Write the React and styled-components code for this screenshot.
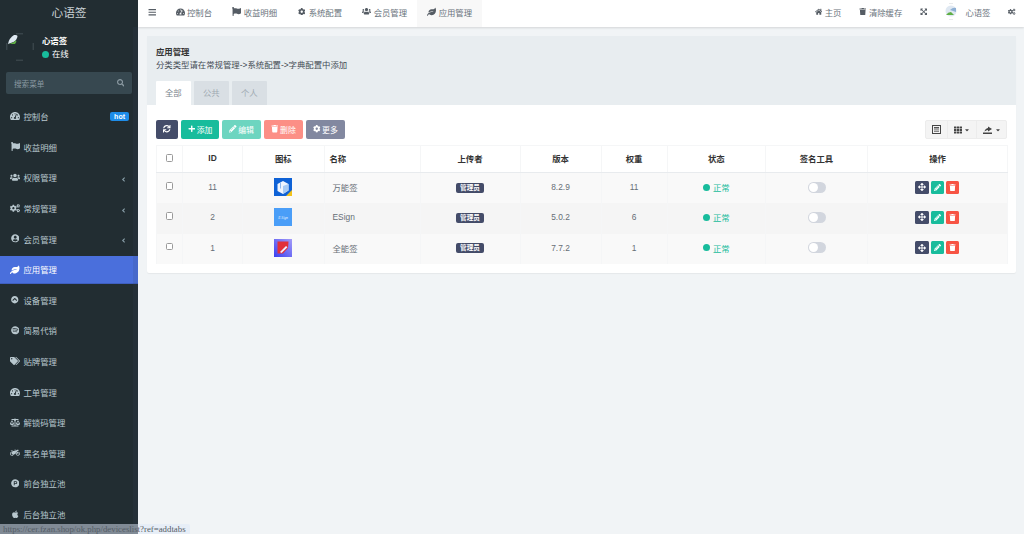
import React from 'react';
import styled, { createGlobalStyle } from 'styled-components';
import {
  FaTachometerAlt, FaFlag, FaUsers, FaCogs, FaUserCircle, FaLeaf, FaChevronCircleUp, FaSpotify, FaTags,
  FaBalanceScale, FaMotorcycle, FaProductHunt, FaApple, FaSearch, FaSync, FaPlus, FaPencilAlt,
  FaTrash, FaCog, FaHome, FaExpandArrowsAlt, FaArrowsAlt, FaTh, FaAngleLeft, FaBars, FaCaretDown,
} from 'react-icons/fa';

const Global = createGlobalStyle`
  html, body { margin: 0; padding: 0; height: 100%; overflow: hidden; background: #f1f4f6; }
  #root { height: 100%; }
  * { box-sizing: border-box; }
  body { font-family: "Liberation Sans", "Noto Sans CJK SC", sans-serif; font-size: 8.4px; color: #444c54; }
`;

const Shell = styled.div`position: relative; display: flex; width: 1024px; height: 534px; overflow: hidden;`;
const Sidebar = styled.aside`position: relative; width: 138px; flex: none; background: #222d32; display: flex; flex-direction: column; overflow: hidden;`;
const SideStrip = styled.div`position: absolute; top: 27px; right: 0; bottom: 0; width: 5px; background: rgba(60, 70, 100, .14);`;
const Logo = styled.div`height: 27px; flex: none; display: flex; align-items: center; justify-content: center; color: #c8d0d4; font-size: 11.7px; padding-bottom: 5px;`;
const UserPanel = styled.div`height: 43px; flex: none; display: flex; padding: 6px 0 0 6px; gap: 8px;`;
const AvatarWrap = styled.div`width: 28px; height: 28px; flex: none;`;
const UserMeta = styled.div`display: flex; flex-direction: column; gap: 3.6px; padding-top: 2.7px; color: #fff; font-size: 8.4px; font-weight: 700; line-height: 10px;`;
const Online = styled.div`display: flex; align-items: center; gap: 3px; font-weight: 400;`;
const Dot = styled.span`width: 7px; height: 7px; border-radius: 50%; background: #18bc9c; display: inline-block; flex: none;`;
const SearchBox = styled.div`margin: 2px 6px 0; height: 22px; flex: none; border-radius: 2px; background: #374850; color: #8a99a1; display: flex; align-items: center; justify-content: space-between; padding: 0 8px; font-size: 7.6px;`;
const Menu = styled.nav`margin-top: 9px; display: flex; flex-direction: column; gap: 3px;`;
const MenuItem = styled.div`
  height: 27.6px; flex: none; display: flex; align-items: center; padding: 0 9px 1px 10px;
  background: ${p => (p.$active ? '#4a6fdc' : 'transparent')};
  box-shadow: ${p => (p.$active ? 'inset 0 -1px 0 #3f5fc0' : 'none')};
  color: ${p => (p.$active ? '#fff' : '#b8c7ce')};
  font-size: 8.4px;
`;
const MenuIcon = styled.span`width: 10px; display: inline-flex; justify-content: center; flex: none;`;
const MenuLabel = styled.span`flex: 1; margin-left: 3.5px;`;
const Hot = styled.span`background: #1e8ce8; color: #fff; font-size: 7px; font-weight: 700; padding: 1px 4px; border-radius: 2px; line-height: 7px;`;
const Arrow = styled.span`display: inline-flex; font-size: 7px; color: #8aa0aa; margin-right: 2px; padding-top: 4px;`;

const Main = styled.div`flex: 1; min-width: 0; display: flex; flex-direction: column;`;
const Topbar = styled.header`height: 27px; flex: none; background: #fff; box-shadow: 0 1px 2px rgba(0,0,0,.12); display: flex; align-items: stretch; justify-content: space-between; color: #6a737c;`;
const TopLeft = styled.div`display: flex; align-items: stretch;`;
const TopRight = styled.div`display: flex; align-items: center; gap: 17.5px; padding-right: 8.5px;`;
const Burger = styled.span`width: 27.5px; display: flex; align-items: center; justify-content: center; font-size: 8.5px; padding-bottom: 3px; color: #555c64;`;
const NavTab = styled.div`display: flex; align-items: center; gap: 2.5px; padding: 0 10px 4px; font-size: 8.4px; background: ${p => (p.$active ? '#f8f8f8' : 'transparent')};`;
const NavIcon = styled.span`width: 9px; display: inline-flex; justify-content: center; color: #555c64; flex: none;`;
const TopLink = styled.span`display: inline-flex; align-items: center; gap: 2.5px; padding-bottom: 4px; svg { font-size: 7.5px; color: #555c64; }`;
const TopUser = styled.span`display: inline-flex; align-items: center; gap: 8.5px; padding-bottom: 4px;`;

const Content = styled.main`flex: 1; padding: 9px 8px 0 9px; min-height: 0;`;
const Panel = styled.section`background: #fff; border-radius: 2px; box-shadow: 0 1px 1px rgba(0,0,0,.05); height: 237px;`;
const PanelHead = styled.div`height: 69px; background: #e8edf0; padding: 11px 9px 0; display: flex; flex-direction: column;`;
const PanelTitle = styled.div`font-weight: 700; line-height: 11px; color: #333;`;
const PanelNote = styled.div`line-height: 13px; margin-top: 1px; color: #444c54;`;
const Tabs = styled.div`display: flex; gap: 3.5px; margin-top: 9px;`;
const Tab = styled.div`width: 34.5px; height: 24px; padding-bottom: 2px; display: flex; align-items: center; justify-content: center; border-radius: 1px 1px 0 0; color: ${p => (p.$active ? '#7b858d' : '#a0aab2')}; background: ${p => (p.$active ? '#fff' : '#d9dfe4')};`;
const PanelBody = styled.div`padding: 15px 9px 0;`;
const Toolbar = styled.div`display: flex; justify-content: space-between; align-items: flex-start; height: 25px;`;
const Actions = styled.div`display: flex; gap: 2.8px;`;
const Btn = styled.span`
  height: 19px; width: ${p => p.$w}px; border-radius: 2px; display: inline-flex; align-items: center; justify-content: center; gap: 1.5px; padding-bottom: 1px;
  color: #fff; background: ${p => p.$bg}; font-size: 7.9px; svg { font-size: 7.5px; }
`;
const Group = styled.div`display: flex; height: 19px; background: #f4f4f4; border: 1px solid #ececec; border-radius: 2px; color: #444;`;
const GroupBtn = styled.span`width: ${p => p.$w}px; display: inline-flex; align-items: center; justify-content: center; gap: 2px; border-right: ${p => (p.$last ? 'none' : '1px solid #ececec')}; svg { font-size: 8px; }`;

const Table = styled.table`width: 851px; table-layout: fixed; border-collapse: collapse; color: #666e76;`;
const Th = styled.th`height: 27px; padding: 0 ${p => (p.$left ? '5px' : '0')} 2px; font-weight: 700; font-size: 8.4px; color: #333; text-align: ${p => (p.$left ? 'left' : 'center')}; border: 1px solid #f5f6f7; border-bottom: 1px solid #e8ebee;`;
const Tr = styled.tr`background: ${p => (p.$alt ? '#f5f5f5' : '#f9f9f9')};`;
const Td = styled.td`height: 30.5px; padding: 0 ${p => (p.$left ? '8px' : '0')} 2px; text-align: ${p => (p.$left ? 'left' : 'center')}; border-left: 1px solid #f5f6f7; border-right: 1px solid #f5f6f7;`;
const Check = styled.span`display: inline-block; width: 7.5px; height: 7.5px; border: 1px solid #9a9a9a; border-radius: 1.5px; background: #fff; vertical-align: middle; position: relative; top: ${p => p.$top ?? -1}px;`;
const IconBox = styled.span`display: inline-flex; vertical-align: middle; width: 18px; height: 18px;`;
const Role = styled.span`display: inline-block; background: #444c69; color: #fff; font-size: 6.6px; font-weight: 700; line-height: 10px; padding: 0 4px; border-radius: 2px;`;
const Status = styled.span`display: inline-flex; align-items: center; gap: 3px; color: #18bc9c;`;
const Toggle = styled.span`display: inline-block; width: 18px; height: 11px; border-radius: 6px; background: #d2d6de; position: relative; vertical-align: middle;
  &::after { content: ''; position: absolute; left: 1px; top: 1px; width: 9px; height: 9px; border-radius: 50%; background: #fff; }`;
const Ops = styled.span`display: inline-flex; gap: 2px; vertical-align: middle; position: relative; left: -.5px;`;
const OpBtn = styled.span`width: ${p => p.$w}px; height: 13px; border-radius: 1.5px; display: inline-flex; align-items: center; justify-content: center; color: #fff; background: ${p => p.$bg}; svg { font-size: ${p => p.$i || 7}px; }`;
const StatusBar = styled.div`position: absolute; left: 0; bottom: 0; width: 190px; height: 10px; background: rgba(222, 232, 248, .5); border-top-right-radius: 2px; color: #555d66; font-family: "Liberation Serif", serif; font-size: 8.8px; line-height: 11px; padding-left: 3px; white-space: nowrap; overflow: hidden;`;

const Avatar = ({ size }) => (
  <svg width={size} height={size} viewBox="0 0 28 28">
    <g fill="none" stroke="#5a666c" strokeWidth=".6">
      <path d="M10 .8h7M10 27.2h7M.8 10v7M27.2 10v7" />
    </g>
    <path d="M2 11q1-6 6-9 3-.5 3.5 1-.5 4-4 6z" fill="#dfe9f2" />
    <path d="M2 11.5q3-1 5-2l3-2q1 1-1 3.500H3z" fill="#5fae45" />
  </svg>
);
const HeadAvatar = () => (
  <svg width="12" height="17" viewBox="0 0 12 17">
    <path d="M4 .5h4M4 16.5h4" stroke="#d0d4d8" strokeWidth=".5" fill="none" />
    <circle cx="6" cy="8" r="5.5" fill="#dfe8f2" />
    <path d="M1 12q2-3 5-3l3 3z" fill="#5fae45" />
    <path d="M5 7q3-3 6-2v4z" fill="#8fb0d4" />
  </svg>
);
const ListIcon = () => (
  <svg width="9" height="9" viewBox="0 0 9 9">
    <rect x=".5" y=".5" width="8" height="8" fill="none" stroke="#444" />
    <path d="M2 2.5h5M2 4h5" stroke="#444" strokeWidth=".9" />
    <rect x="2" y="5.5" width="5" height="1.5" fill="#888" />
  </svg>
);
const ExportIcon = () => (
  <svg width="10" height="9" viewBox="0 0 10 9">
    <path d="M0 7.5h9V9H0z" fill="#444" />
    <path d="M1.5 6.5Q2 3.5 5 3V1.500L9 4 5 6.5V5Q3 5 1.5 6.5z" fill="#444" />
  </svg>
);

const items = [
  ['控制台', FaTachometerAlt, 10, 'hot'], ['收益明细', FaFlag, 9], ['权限管理', FaUsers, 10.5, 'arrow'], ['常规管理', FaCogs, 10.5, 'arrow'],
  ['会员管理', FaUserCircle, 8.5, 'arrow'], ['应用管理', FaLeaf, 9.5, null, true], ['设备管理', FaChevronCircleUp, 7.5], ['简易代销', FaSpotify, 8.5],
  ['贴牌管理', FaTags, 10], ['工单管理', FaTachometerAlt, 10], ['解锁码管理', FaBalanceScale, 11], ['黑名单管理', FaMotorcycle, 11.5],
  ['前台独立池', FaProductHunt, 8.5], ['后台独立池', FaApple, 8.5],
];

const IconCube = () => (
  <svg width="18" height="18" viewBox="0 0 18 18">
    <rect width="18" height="18" fill="#0f62d6" />
    <path d="M12 18L18 12v6z" fill="#f2c21b" />
    <path d="M3.5 6L9 3l5.5 3v6.5L9 16l-5.5-3z" fill="#f0f6ff" />
    <path d="M9 8v8l5.5-3.5V6z" fill="#a9ccf5" />
    <path d="M6.5 4.5v6" stroke="#8fb8ee" strokeWidth="1" />
  </svg>
);
const IconSign = () => (
  <svg width="18" height="18" viewBox="0 0 18 18">
    <rect width="18" height="18" fill="#4a9ef8" />
    <text x="9" y="10.5" textAnchor="middle" fontSize="3.6" fontStyle="italic" fill="#eaf4ff" fontFamily="Liberation Serif, serif">E Sign</text>
  </svg>
);
const IconAll = () => (
  <svg width="18" height="18" viewBox="0 0 18 18">
    <defs><linearGradient id="g" x1="0" y1="1" x2="1" y2="0"><stop offset="0" stopColor="#3a3ff0" /><stop offset="1" stopColor="#a49cf8" /></linearGradient></defs>
    <rect width="18" height="18" fill="url(#g)" />
    <path d="M3.5 2.5h11L14 9l-5 5.5H3.500z" fill="#e2303a" />
    <path d="M6 13l6-6 1.500 1.200L7.500 14z" fill="#eef0ff" />
  </svg>
);

const rows = [
  ['11', IconCube, '万能签', '8.2.9', '11'],
  ['2', IconSign, 'ESign', '5.0.2', '6'],
  ['1', IconAll, '全能签', '7.7.2', '1'],
];
const widths = [26, 60, 81.5, 96, 100, 81, 66, 98.5, 102, 140];
const navTabs = [
  ['控制台', FaTachometerAlt, 10], ['收益明细', FaFlag, 9], ['系统配置', FaCog, 7.5], ['会员管理', FaUsers, 10.5], ['应用管理', FaLeaf, 9.5, true],
];

export default function App() {
  return (
    <Shell>
      <Global />
      <Sidebar>
        <Logo>心语签</Logo>
        <UserPanel>
          <AvatarWrap><Avatar size={28} /></AvatarWrap>
          <UserMeta>
            <span>心语签</span>
            <Online><Dot />在线</Online>
          </UserMeta>
        </UserPanel>
        <SearchBox><span>搜索菜单</span><FaSearch size={7.5} /></SearchBox>
        <Menu>
          {items.map(([label, Icon, size, extra, active]) => (
            <MenuItem key={label} $active={active}>
              <MenuIcon><Icon size={size} /></MenuIcon>
              <MenuLabel>{label}</MenuLabel>
              {extra === 'hot' && <Hot>hot</Hot>}
              {extra === 'arrow' && <Arrow><FaAngleLeft /></Arrow>}
            </MenuItem>
          ))}
        </Menu>
        <SideStrip />
      </Sidebar>
      <Main>
        <Topbar>
          <TopLeft>
            <Burger><FaBars /></Burger>
            {navTabs.map(([label, Icon, size, active]) => (
              <NavTab key={label} $active={active}><NavIcon><Icon size={size} /></NavIcon>{label}</NavTab>
            ))}
          </TopLeft>
          <TopRight>
            <TopLink><FaHome />主页</TopLink>
            <TopLink><FaTrash />清除缓存</TopLink>
            <TopLink><FaExpandArrowsAlt /></TopLink>
            <TopUser><HeadAvatar />心语签</TopUser>
            <TopLink><FaCogs /></TopLink>
          </TopRight>
        </Topbar>
        <Content>
          <Panel>
            <PanelHead>
              <PanelTitle>应用管理</PanelTitle>
              <PanelNote>分类类型请在常规管理-&gt;系统配置-&gt;字典配置中添加</PanelNote>
              <Tabs>
                <Tab $active>全部</Tab>
                <Tab>公共</Tab>
                <Tab>个人</Tab>
              </Tabs>
            </PanelHead>
            <PanelBody>
              <Toolbar>
                <Actions>
                  <Btn $w={22} $bg="#444c69"><FaSync /></Btn>
                  <Btn $w={38.5} $bg="#18bc9c"><FaPlus />添加</Btn>
                  <Btn $w={39} $bg="#6dd5c0"><FaPencilAlt />编辑</Btn>
                  <Btn $w={39} $bg="#fc8f86"><FaTrash />删除</Btn>
                  <Btn $w={39.5} $bg="#8288a0"><FaCog />更多</Btn>
                </Actions>
                <Group>
                  <GroupBtn $w={22}><ListIcon /></GroupBtn>
                  <GroupBtn $w={29}><FaTh /><FaCaretDown size={6} /></GroupBtn>
                  <GroupBtn $w={29} $last><ExportIcon /><FaCaretDown size={6} /></GroupBtn>
                </Group>
              </Toolbar>
              <Table>
                <colgroup>{widths.map((w, i) => <col key={i} style={{ width: w }} />)}</colgroup>
                <thead>
                  <tr>
                    <Th><Check /></Th>
                    <Th>ID</Th>
                    <Th>图标</Th>
                    <Th $left>名称</Th>
                    <Th>上传者</Th>
                    <Th>版本</Th>
                    <Th>权重</Th>
                    <Th>状态</Th>
                    <Th>签名工具</Th>
                    <Th>操作</Th>
                  </tr>
                </thead>
                <tbody>
                  {rows.map(([id, Ico, name, ver, weight], i) => (
                    <Tr key={id} $alt={i === 1}>
                      <Td><Check $top={-2} /></Td>
                      <Td>{id}</Td>
                      <Td><IconBox><Ico /></IconBox></Td>
                      <Td $left>{name}</Td>
                      <Td><Role>管理员</Role></Td>
                      <Td>{ver}</Td>
                      <Td>{weight}</Td>
                      <Td><Status><Dot />正常</Status></Td>
                      <Td><Toggle /></Td>
                      <Td>
                        <Ops>
                          <OpBtn $w={14} $bg="#444c69" $i={8}><FaArrowsAlt /></OpBtn>
                          <OpBtn $w={13} $bg="#18bc9c"><FaPencilAlt /></OpBtn>
                          <OpBtn $w={13} $bg="#f75444"><FaTrash /></OpBtn>
                        </Ops>
                      </Td>
                    </Tr>
                  ))}
                </tbody>
              </Table>
            </PanelBody>
          </Panel>
        </Content>
      </Main>
      <StatusBar>https://cer.fzan.shop/ok.php/deviceslist?ref=addtabs</StatusBar>
    </Shell>
  );
}
